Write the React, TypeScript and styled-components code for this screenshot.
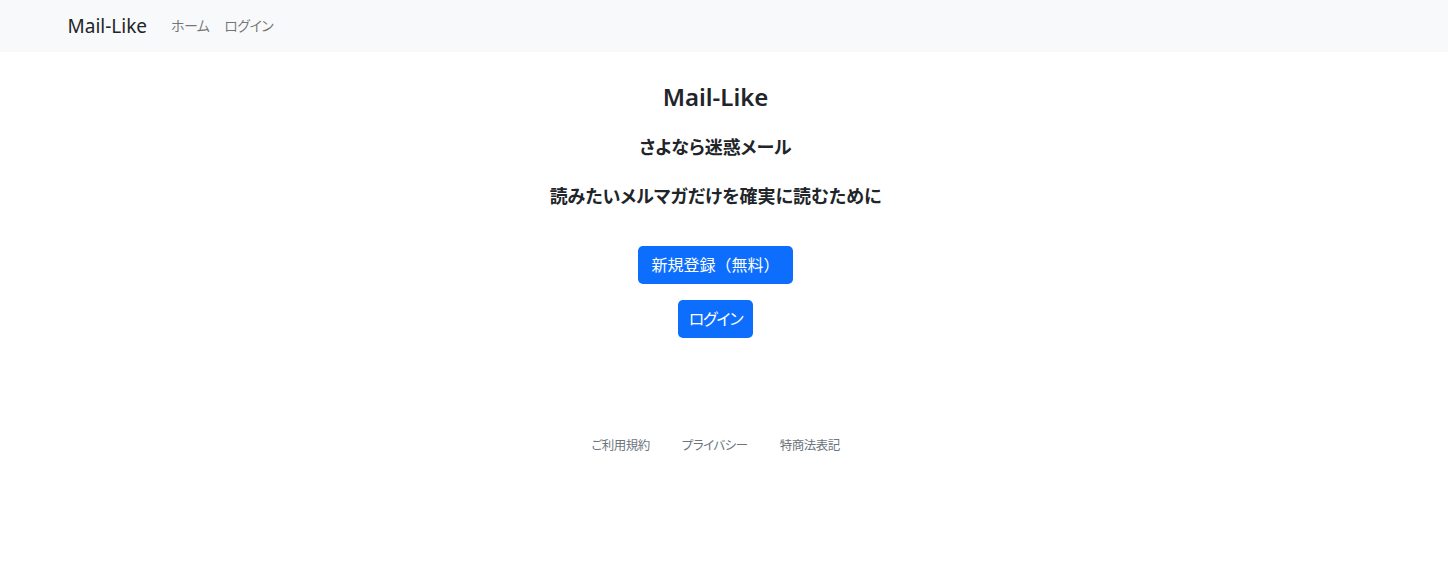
import React from "react";
import styled, { createGlobalStyle } from "styled-components";

const GlobalStyle = createGlobalStyle`
  html, body { margin: 0; padding: 0; background: #fff; }
  body {
    font-family: "Noto Sans", "Noto Sans CJK JP", sans-serif;
    color: #212529;
    font-size: 16px;
    line-height: 1.5;
    font-feature-settings: "palt";
  }
  * { box-sizing: border-box; }
`;

const Page = styled.div`
  padding-right: 17px;
  min-height: 563px;
`;

const Navbar = styled.nav`
  background: #f8f9fa;
  height: 52px;
  margin-right: -17px;
  padding-right: 17px;
  display: flex;
  align-items: center;
`;

const NavContainer = styled.div`
  width: 100%;
  max-width: 1320px;
  margin: 0 auto;
  padding: 0 12px;
  display: flex;
  align-items: center;
`;

const Brand = styled.a`
  font-size: 19px;
  color: #212529;
  text-decoration: none;
  margin-right: 16px;
  line-height: 30px;
`;

const NavLink = styled.a`
  font-size: 14px;
  color: rgba(0, 0, 0, 0.55);
  text-decoration: none;
  padding: 0 7px 0 8px;
  line-height: 24px;
  letter-spacing: -0.6px;
`;

const Hero = styled.main`
  display: flex;
  flex-direction: column;
  align-items: center;
  padding-top: 30px;
`;

const Title = styled.h1`
  margin: 0;
  font-size: 24px;
  font-weight: 600;
  line-height: 29px;
`;

const Subtitle = styled.h2<{ $mt: number }>`
  margin: ${(p) => p.$mt}px 0 0;
  font-size: 18px;
  font-weight: 600;
  line-height: 24px;
`;

const Buttons = styled.div`
  margin-top: 38px;
  display: flex;
  flex-direction: column;
  align-items: center;
  gap: 16px;
`;

const Button = styled.a<{ $compact?: boolean }>`
  display: inline-block;
  background: #0d6efd;
  color: #fff;
  border-radius: 5px;
  padding: 0 ${(p) => (p.$compact ? 11 : 13)}px;
  height: 38px;
  line-height: 38px;
  font-size: 16px;
  text-decoration: none;
  font-feature-settings: ${(p) => (p.$compact ? '"palt"' : "normal")};
  letter-spacing: ${(p) => (p.$compact ? "-1.2px" : "0")};
`;

const Footer = styled.footer`
  margin-top: 98px;
  display: flex;
  justify-content: center;
  gap: 32px;
`;

const FooterLink = styled.a`
  font-size: 12.5px;
  color: #6c757d;
  text-decoration: none;
  line-height: 20px;
  letter-spacing: -0.5px;
`;

export default function App() {
  return (
    <>
      <GlobalStyle />
      <Page>
        <Navbar>
          <NavContainer>
            <Brand href="#">Mail-Like</Brand>
            <NavLink href="#">ホーム</NavLink>
            <NavLink href="#">ログイン</NavLink>
          </NavContainer>
        </Navbar>
        <Hero>
          <Title>Mail-Like</Title>
          <Subtitle $mt={24}>さよなら迷惑メール</Subtitle>
          <Subtitle $mt={25}>読みたいメルマガだけを確実に読むために</Subtitle>
          <Buttons>
            <Button href="#">新規登録（無料）</Button>
            <Button href="#" $compact>
              ログイン
            </Button>
          </Buttons>
        </Hero>
        <Footer>
          <FooterLink href="#">ご利用規約</FooterLink>
          <FooterLink href="#">プライバシー</FooterLink>
          <FooterLink href="#">特商法表記</FooterLink>
        </Footer>
      </Page>
    </>
  );
}
